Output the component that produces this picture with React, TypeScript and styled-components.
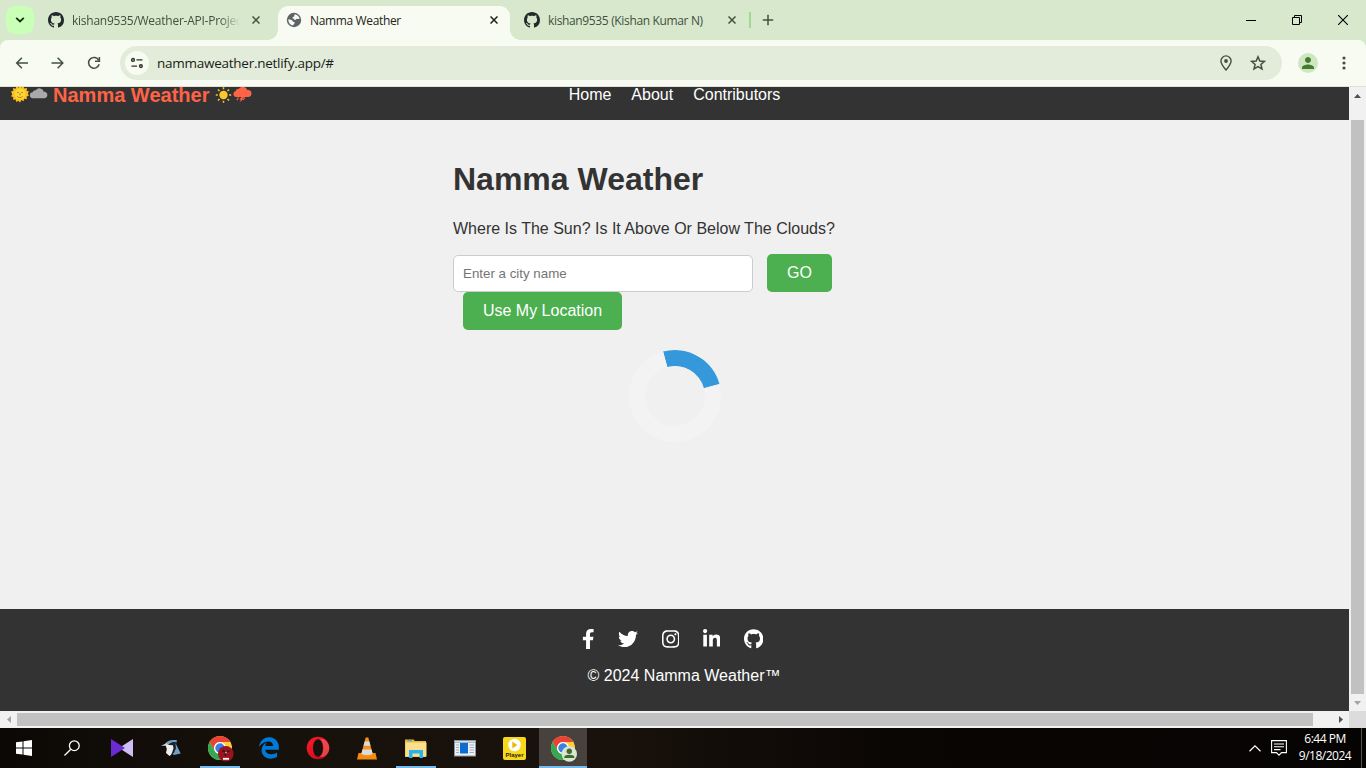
import React from "react";
import styled, { createGlobalStyle, css } from "styled-components";
import { FaFacebookF, FaTwitter, FaInstagram, FaLinkedinIn, FaGithub } from "react-icons/fa";
import { FaEdgeLegacy } from "react-icons/fa6";
import { MdPerson } from "react-icons/md";

const Global = createGlobalStyle`
  * { box-sizing: border-box; }
  body { margin: 0; overflow: hidden; font-family: "Liberation Sans", Arial, sans-serif; }
  svg { display: block; flex: none; }
  button, input { font-family: inherit; }
`;

const Screen = styled.div`
  width: 1366px;
  height: 768px;
  display: flex;
  flex-direction: column;
  overflow: hidden;
  background: #d7e8cd;
`;

/* ---------- Tab strip ---------- */
const TabStrip = styled.div`
  height: 40px;
  flex: none;
  display: flex;
  align-items: flex-start;
  padding-left: 6px;
  font-family: "Open Sans", "Noto Sans", sans-serif;
  font-size: 12px;
  color: #42503d;
`;
const TabSearch = styled.div`
  width: 28px;
  height: 28px;
  margin: 6px 6px 0 0;
  border-radius: 9px;
  background: #c9ffb6;
  display: flex;
  align-items: center;
  justify-content: center;
`;
const Tab = styled.div<{ $active?: boolean; $width: number; $gapAfter?: number }>`
  position: relative;
  width: ${(p) => p.$width}px;
  height: 34px;
  margin-top: 6px;
  margin-right: ${(p) => p.$gapAfter ?? 0}px;
  padding: 0 12px 6px 8px;
  display: flex;
  align-items: center;
  gap: 8px;
  ${(p) =>
    p.$active &&
    css`
      background: #f8fbf1;
      color: #1c241a;
      border-radius: 10px 10px 0 0;
      &::before,
      &::after {
        content: "";
        position: absolute;
        bottom: 0;
        width: 10px;
        height: 10px;
      }
      &::before {
        left: -10px;
        background: radial-gradient(circle at 0 0, transparent 9.5px, #f8fbf1 10px);
      }
      &::after {
        right: -10px;
        background: radial-gradient(circle at 100% 0, transparent 9.5px, #f8fbf1 10px);
      }
    `}
`;
const TabTitle = styled.span<{ $fade?: boolean; $track?: number }>`
  flex: 1;
  overflow: hidden;
  white-space: nowrap;
  line-height: 18px;
  padding-top: 1px;
  letter-spacing: ${(p) => p.$track ?? -0.35}px;
  ${(p) =>
    p.$fade &&
    css`
      margin-right: 4px;
      mask-image: linear-gradient(90deg, #000 88%, transparent);
    `}
`;
const TabDivider = styled.div`
  width: 2px;
  height: 16px;
  margin: 12px 11px 0 1px;
  background: #a1d892;
`;
const NewTab = styled.div`
  margin-top: 14px;
`;
const WindowControls = styled.div`
  margin-left: auto;
  display: flex;
`;
const WinButton = styled.div`
  width: 46px;
  height: 40px;
  display: flex;
  align-items: center;
  justify-content: center;
`;

/* ---------- Toolbar ---------- */
const Toolbar = styled.div`
  height: 47px;
  flex: none;
  display: flex;
  align-items: center;
  padding: 0 12px 0 12px;
  background: #f8fbf1;
  border-bottom: 1px solid #dfe2d1;
  border-radius: 8px 8px 0 0;
  color: #42503d;
`;
const ToolIcon = styled.div<{ $gap?: number }>`
  width: 20px;
  height: 20px;
  margin-right: ${(p) => p.$gap ?? 16}px;
  display: flex;
  align-items: center;
  justify-content: center;
`;
const Omnibox = styled.div`
  width: 1162px;
  height: 34px;
  border-radius: 17px;
  background: #e3ecdb;
  display: flex;
  align-items: center;
  padding: 0 14px 0 5px;
  gap: 12px;
`;
const SiteInfo = styled.div`
  width: 24px;
  height: 24px;
  border-radius: 50%;
  background: #f8fbf1;
  display: flex;
  align-items: center;
  justify-content: center;
  margin-right: -4px;
`;
const Url = styled.span`
  flex: 1;
  font: 13.5px/20px "Open Sans", "Noto Sans", sans-serif;
  letter-spacing: -0.26px;
  color: #191d17;
`;
const Avatar = styled.div`
  width: 20px;
  height: 20px;
  margin: 0 16px 0 16px;
  border-radius: 50%;
  background: #cfe6c3;
  color: #437c2c;
  display: flex;
  align-items: center;
  justify-content: center;
`;

/* ---------- Web page ---------- */
const Viewport = styled.div`
  flex: 1;
  display: grid;
  grid-template-columns: 1349px 17px;
  grid-template-rows: 624px 17px;
`;
const Page = styled.div`
  display: flex;
  flex-direction: column;
  background: #f0f0f0;
  overflow: hidden;
`;
const NavBar = styled.header`
  height: 33px;
  flex: none;
  overflow: hidden;
  display: grid;
  grid-template-columns: 1fr auto 1fr;
  align-items: start;
  background: #333;
`;
const Brand = styled.div`
  display: flex;
  align-items: flex-start;
  margin: -3px 0 0 10px;
  font-size: 20px;
  font-weight: bold;
  line-height: 23px;
  color: #ff6347;
  white-space: pre;
`;
const BrandName = styled.span`
  margin: 0 0 0 -0.5px;
`;
const NavLinks = styled.nav`
  display: flex;
  gap: 20px;
  margin-top: -1px;
`;
const NavLink = styled.a`
  color: #fff;
  font-size: 16px;
  line-height: 18px;
`;
const Main = styled.main`
  flex: 1;
  width: 443px;
  margin: 0 auto;
  padding-top: 41px;
  color: #333;
`;
const Title = styled.h1`
  margin: 0;
  font-size: 32px;
  line-height: 37px;
`;
const Tagline = styled.p`
  margin: 22px 0 16px;
  font-size: 16px;
  line-height: 18px;
  white-space: nowrap;
  color: #333;
`;
const SearchRow = styled.div`
  display: flex;
  align-items: flex-end;
  gap: 14px;
`;
const CityInput = styled.input`
  width: 300px;
  height: 37px;
  padding: 0 9px;
  border: 1px solid #ccc;
  border-radius: 5px;
  background: #fff;
  font-size: 13.333px;
  outline: none;
  &::placeholder { color: #757575; opacity: 1; }
`;
const ActionButton = styled.button<{ $width: number; $indent?: number }>`
  display: block;
  width: ${(p) => p.$width}px;
  height: 38px;
  margin-left: ${(p) => p.$indent ?? 0}px;
  padding: 0;
  border: 0;
  border-radius: 5px;
  background: #4caf50;
  color: #fff;
  font-size: 16px;
`;
const Spinner = styled.div`
  width: 92px;
  height: 92px;
  margin: 20px 0 0 176px;
  border: 16px solid #f3f3f3;
  border-top-color: #3498db;
  border-radius: 50%;
  transform: rotate(30deg);
`;
const Footer = styled.footer`
  height: 102px;
  flex: none;
  padding-top: 20px;
  background: #333;
  color: #fff;
  display: flex;
  flex-direction: column;
  align-items: center;
`;
const Socials = styled.div`
  display: flex;
  align-items: center;
  gap: 23.6px;
  margin-right: 4px;
`;
const Social = styled.a<{ $width: number }>`
  display: block;
  svg { width: ${(p) => p.$width}px; height: 20px; }
`;
const Copyright = styled.p`
  margin: 18px 0 0 19px;
  font-size: 16px;
  line-height: 18px;
`;

/* ---------- Scroll bars ---------- */
const ScrollV = styled.div`
  display: flex;
  flex-direction: column;
  align-items: center;
  background: #f1f1f1;
`;
const ScrollH = styled.div`
  display: flex;
  align-items: center;
  background: #f1f1f1;
`;
const ScrollButton = styled.div`
  width: 17px;
  height: 17px;
  display: flex;
  align-items: center;
  justify-content: center;
`;
const ThumbV = styled.div`
  width: 13px;
  height: 574px;
  margin: 16px 0 auto;
  background: #c1c1c1;
`;
const ThumbH = styled.div`
  width: 1296px;
  height: 13px;
  margin-right: auto;
  background: #c1c1c1;
`;
const Corner = styled.div`
  background: #dcdcdc;
`;

/* ---------- Task bar ---------- */
const TaskBar = styled.div`
  height: 40px;
  flex: none;
  display: flex;
  background: linear-gradient(90deg, #0b0805 0, #17110b 250px, #19120c 600px, #0a0604 900px, #060403 100%);
  color: #fff;
`;
const TaskGroup = styled.div<{ $gap: number; $left?: number }>`
  display: flex;
  gap: ${(p) => p.$gap}px;
  margin-left: ${(p) => p.$left ?? 0}px;
`;
const TaskItem = styled.div<{ $open?: boolean; $active?: boolean }>`
  position: relative;
  width: 48px;
  height: 40px;
  display: flex;
  align-items: center;
  justify-content: center;
  background: ${(p) => (p.$active ? "#48423f" : "transparent")};
  ${(p) =>
    (p.$open || p.$active) &&
    css`
      &::after {
        content: "";
        position: absolute;
        bottom: 0;
        left: ${p.$active ? 0 : 4}px;
        right: ${p.$active ? 0 : 4}px;
        height: 2px;
        background: #76b9ed;
      }
    `}
`;
const Tray = styled.div`
  margin-left: auto;
  display: flex;
  align-items: center;
  gap: 10px;
`;
const Clock = styled.div`
  width: 62px;
  margin: -3px -5px 0 -3px;
  text-align: center;
  font: 12px/17px "Open Sans", "Noto Sans", sans-serif;
  letter-spacing: -0.5px;
  white-space: nowrap;
`;
const ShowDesktop = styled.div`
  width: 5px;
  height: 40px;
  border-left: 1px solid #56524f;
`;

const Octocat = () => (
  <svg width="16" height="16" viewBox="0 0 16 16" fill="#24292e">
    <path d="M8 0C3.58 0 0 3.58 0 8c0 3.54 2.29 6.53 5.47 7.59.4.07.55-.17.55-.38 0-.19-.01-.82-.01-1.49-2.01.37-2.53-.49-2.69-.94-.09-.23-.48-.94-.82-1.13-.28-.15-.68-.52-.01-.53.63-.01 1.08.58 1.23.82.72 1.21 1.87.87 2.33.66.07-.52.28-.87.51-1.07-1.78-.2-3.64-.89-3.64-3.95 0-.87.31-1.59.82-2.15-.08-.2-.36-1.02.08-2.12 0 0 .67-.21 2.2.82.64-.18 1.32-.27 2-.27.68 0 1.36.09 2 .27 1.53-1.04 2.2-.82 2.2-.82.44 1.1.16 1.92.08 2.12.51.56.82 1.27.82 2.15 0 3.07-1.87 3.75-3.65 3.95.29.25.54.73.54 1.48 0 1.07-.01 1.93-.01 2.2 0 .21.15.46.55.38A8.013 8.013 0 0016 8c0-4.42-3.58-8-8-8z" />
  </svg>
);
const Globe = () => (
  <svg width="16" height="16" viewBox="0 0 16 16">
    <circle cx="8" cy="8" r="7.200" fill="#5f6368" />
    <path d="M8.800 2.300c2.300.3 4.300 2 4.900 4.300-1 .9-1.800.2-2.600.2-1 0-.8 1.200-2 1.200-1.400 0-.8-1.500-2.200-1.600-.9-.1-.3-1.700.7-1.700 1.300 0 .2-1.500 1.200-2.400zM2.300 7.300c1.500.4 3.800.5 4.500 1.900.4.900 1.800.3 1.900 1.500.1 1.400-1.500 1.200-1.500 2.900-2.600-.3-5-2.700-4.900-6.300z" fill="#f8fbf1" />
  </svg>
);
const CloseX = ({ color = "#42503d" }: { color?: string }) => (
  <svg width="8" height="8" viewBox="0 0 8 8" stroke={color} strokeWidth="1.500">
    <path d="M.5.5l7 7M7.500 .5l-7 7" />
  </svg>
);

const SunFace = () => (
  <svg width="20" height="20" viewBox="0 -1 20 22">
    <path fill="#fcc21b" d="M10 .5l1.600 2.400 2.300-1.600.8 2.700 2.900-.6-.3 2.900 2.500.9-1.200 2.300 1.200 2.400-2.500.9.3 2.900-2.900-.4-.8 2.700-2.500-1.500L10 19.500l-1.600-2.200-2.400 1.400-.8-2.700-2.900.4.400-2.900-2.500-.9 1.300-2.300L.2 7.300l2.500-.9-.4-2.900 2.900.6.8-2.700 2.400 1.600z" />
    <circle cx="10" cy="10" r="6" fill="#fdd835" />
    <path d="M6.700 8.300h2M11.300 8.300h2M10 9v2.400M7 12.600c1.500 1.800 4.500 1.800 6 0" fill="none" stroke="#b27a28" strokeWidth="1" />
  </svg>
);
const CloudShape = () => (
  <svg width="18" height="20" viewBox="0 0 18 20">
    <path fill="#a9a9a9" d="M3 14.200a3 3 0 0 1-.4-6 3 3 0 0 1 3.200-2 4.500 4.500 0 0 1 8 1.500A3.300 3.300 0 0 1 14.800 14.200z" />
  </svg>
);
const SunRays = () => (
  <svg width="18" height="20" viewBox="0 0 18 20">
    <circle cx="8.500" cy="11" r="4.200" fill="#fdc72f" />
    <path d="M8.500 3.200v2M8.500 16.800v2M.8 11h2M14.200 11h2M3 5.500l1.500 1.500M12.500 15l1.500 1.500M14 5.500L12.500 7M4.500 15L3 16.500" stroke="#fdc72f" strokeWidth="1.500" />
  </svg>
);
const Storm = () => (
  <svg width="19" height="20" viewBox="0 0 19 20">
    <path fill="#ff6347" d="M3 13a3 3 0 0 1-.3-5.900 3 3 0 0 1 3.300-2.300 4.600 4.600 0 0 1 8.200 1.300 3.500 3.500 0 0 1 1.500 6.900h-4.200l-2.400 2h1.300L6.500 18.500l1.500-2.800H6.300L8.500 13z" />
    <path d="M5.500 13.500l-1.700 2.600M11.800 13.500l-1.500 2.600" stroke="#ff6347" strokeWidth="1.100" />
  </svg>
);

const ChromeLogo = ({ badge }: { badge: "red" | "person" }) => (
  <svg width="28" height="28" viewBox="0 0 28 28">
    <circle cx="14" cy="14" r="12" fill="#ffcd40" />
    <path d="M3.600 8A12 12 0 0 1 24.400 8H14a6 6 0 0 0-5.200 9z" fill="#ea4335" />
    <path d="M3.600 8a12 12 0 0 0 10.400 18l5.200-9a6 6 0 0 1-10.400 0z" fill="#35a853" />
    <circle cx="14" cy="14" r="6" fill="#fff" />
    <circle cx="14" cy="14" r="4.700" fill="#3f7de8" />
    {badge === "red" ? (
      <g>
        <circle cx="19.800" cy="19.800" r="7.800" fill="#9b1320" />
        <path d="M16.500 16.500l3 1.500 4-1M19.500 18v4" stroke="#401016" strokeWidth="1.600" fill="none" />
        <path d="M17 24.800h6" stroke="#fff" strokeWidth="1.800" />
        <circle cx="20" cy="18.500" r="1" fill="#c9a3a3" />
      </g>
    ) : (
      <g>
        <circle cx="20.300" cy="20" r="7.700" fill="#d7e8cd" />
        <circle cx="20.300" cy="17.200" r="2.700" fill="#426834" />
        <path d="M15.300 24v-1.200c0-2.800 10-2.800 10 0V24z" fill="#426834" />
      </g>
    )}
  </svg>
);

const pinned: { key: string; open?: boolean; active?: boolean; icon: React.ReactNode }[] = [
  {
    key: "vs",
    icon: (
      <svg width="22" height="18" viewBox="0 0 22 18">
        <path d="M22 0v18L8 9z" fill="#cdbcf5" />
        <path d="M0 0l14 9L0 18z" fill="#6a2bd0" />
      </svg>
    ),
  },
  {
    key: "bird",
    icon: (
      <svg width="20" height="18" viewBox="0 0 20 18">
        <path d="M4 5C6 1.500 10 .5 16 1.200L15 5l4.700 9.500-6.700 1.500-4-3z" fill="#6f9fc9" />
        <path d="M4.500 6L9 4l4 1.500.8 3.500-1.300 5-4 3-3.500-3 .8-4z" fill="#f0efe9" />
        <path d="M0 6.800l5.500-2.600 1.500 1-1.800 1.600z" fill="#d9d9d4" />
        <path d="M6.500 5.200L12 3l3.500.3-1 2 .5 4-2 4.500-3.500 3 1.700-3.500 1.300-4-.6-3-3.400-.2z" fill="#17232f" />
      </svg>
    ),
  },
  { key: "chrome-red", open: true, icon: <ChromeLogo badge="red" /> },
  { key: "edge", icon: <FaEdgeLegacy size={22} color="#0078d7" /> },
  {
    key: "opera",
    icon: (
      <svg width="24" height="24" viewBox="0 0 24 24">
        <defs>
          <linearGradient id="op" x1="0" y1="0" x2="1" y2="1">
            <stop offset="0" stopColor="#ff1b2d" />
            <stop offset=".6" stopColor="#d41220" />
            <stop offset="1" stopColor="#a70014" />
          </linearGradient>
        </defs>
        <path fillRule="evenodd" fill="url(#op)" d="M12 .7a11.300 11.300 0 1 0 0 22.600 11.300 11.300 0 1 0 0-22.600zM12 3.300c2.900 0 4.900 3.900 4.900 8.700s-2 8.700-4.900 8.700S7.100 16.800 7.100 12s2-8.700 4.900-8.700z" />
        <path d="M14 3.300c4.500 2.500 4.500 15 0 17.400 5 1.500 9.300-4 9.300-8.700S19 1.800 14 3.300z" fill="#ff6a6a" opacity=".6" />
      </svg>
    ),
  },
  {
    key: "vlc",
    icon: (
      <svg width="20" height="23" viewBox="0 0 20 23">
        <path d="M1.500 16h17l1.500 6.500H0z" fill="#f58a0b" />
        <path d="M8.700.5h2.600L16 18c-2 2-10 2-12 0z" fill="#f7931a" />
        <path d="M7.700 4.500h4.600l1.200 4.200H6.500zM5.400 12.500h9.200l1 4c-2 2-9.200 2-11.200 0z" fill="#d9dcde" />
      </svg>
    ),
  },
  {
    key: "files",
    open: true,
    icon: (
      <svg width="22" height="19" viewBox="0 0 22 19">
        <path d="M0 .5h8.500l1.500 1.500h11V18H0z" fill="#e9b93f" />
        <path d="M.5 3.500h21V17.500H.5z" fill="#fbdf8b" />
        <path d="M2.500 1.700H7" stroke="#35a7df" />
        <path d="M4 19v-8h14v8h-3.500v-4.500h-7V19z" fill="#28b4ee" />
      </svg>
    ),
  },
  {
    key: "reader",
    icon: (
      <svg width="22" height="17" viewBox="0 0 22 17">
        <path d="M0 0h22v16.500H0z" fill="#8a98a8" />
        <path d="M1 3h20v12.500H1z" fill="#eef1f3" />
        <path d="M1 1h20v1.500H1z" fill="#d5dce3" />
        <path d="M6 3h8v10.500H6z" fill="#0b6cd3" />
        <path d="M2 5h3M2 7.500h3M2 10h3M2 12.500h3M15.500 5H20M15.500 7.500H20M15.500 10H20M15.500 12.500H20" stroke="#a3aeb9" />
      </svg>
    ),
  },
  {
    key: "player",
    icon: (
      <svg width="23" height="23" viewBox="0 0 23 23">
        <rect width="23" height="23" rx="2" fill="#f8d81c" />
        <circle cx="11.500" cy="8" r="6.300" fill="#fff" />
        <path d="M9.300 4.500l5 3.500-5 3.500z" fill="#e5b80b" />
        <text x="11.500" y="20.300" textAnchor="middle" fontFamily="Liberation Sans, sans-serif" fontWeight="bold" fontSize="6" fill="#2a2410">Player</text>
      </svg>
    ),
  },
  { key: "chrome-person", active: true, icon: <ChromeLogo badge="person" /> },
];

const socials = [
  { name: "facebook", width: 12.5, Icon: FaFacebookF },
  { name: "twitter", width: 20, Icon: FaTwitter },
  { name: "instagram", width: 17.5, Icon: FaInstagram },
  { name: "linkedin", width: 17.5, Icon: FaLinkedinIn },
  { name: "github", width: 19.4, Icon: FaGithub },
];

export default function App() {
  return (
    <Screen>
      <Global />
      <TabStrip>
        <TabSearch>
          <svg width="10" height="6" viewBox="0 0 10 6" fill="none" stroke="#1b2a16" strokeWidth="1.800">
            <path d="M1.200 .8L5 4.500 8.800.8" />
          </svg>
        </TabSearch>
        <Tab $width={232} $gapAfter={6}>
          <Octocat />
          <TabTitle $fade $track={-0.25}>kishan9535/Weather-API-Project</TabTitle>
          <CloseX />
        </Tab>
        <Tab $active $width={232} $gapAfter={6}>
          <Globe />
          <TabTitle>Namma Weather</TabTitle>
          <CloseX color="#1c241a" />
        </Tab>
        <Tab $width={232}>
          <Octocat />
          <TabTitle>kishan9535 (Kishan Kumar N)</TabTitle>
          <CloseX />
        </Tab>
        <TabDivider />
        <NewTab>
          <svg width="12" height="12" viewBox="0 0 12 12" stroke="#42503d" strokeWidth="1.500">
            <path d="M6 .8v10.400M.8 6h10.400" />
          </svg>
        </NewTab>
        <WindowControls>
          <WinButton>
            <svg width="10" height="10" viewBox="0 0 10 10"><path d="M0 5.500h10" stroke="#000" /></svg>
          </WinButton>
          <WinButton>
            <svg width="10" height="10" viewBox="0 0 10 10" fill="none" stroke="#000">
              <path d="M.5 2.500h7v7h-7zM2.500 2.500v-2h7v7h-2" />
            </svg>
          </WinButton>
          <WinButton>
            <svg width="10" height="10" viewBox="0 0 10 10" stroke="#000" strokeWidth="1.100"><path d="M0 0l10 10M10 0L0 10" /></svg>
          </WinButton>
        </WindowControls>
      </TabStrip>

      <Toolbar>
        <ToolIcon>
          <svg width="14" height="12" viewBox="0 0 14 12" fill="none" stroke="currentColor" strokeWidth="1.500">
            <path d="M13 6H2M6.900 .8L1.700 6l5.200 5.200" />
          </svg>
        </ToolIcon>
        <ToolIcon>
          <svg width="14" height="12" viewBox="0 0 14 12" fill="none" stroke="currentColor" strokeWidth="1.500">
            <path d="M.5 6h11.500M6.600 .8L11.800 6l-5.200 5.200" />
          </svg>
        </ToolIcon>
        <ToolIcon>
          <svg width="14" height="14" viewBox="0 0 14 14" fill="none" stroke="currentColor" strokeWidth="1.500">
            <path d="M12.200 8.300A5.400 5.400 0 1 1 11.800 4.300" />
            <path d="M12.400 1v4.200H8" />
          </svg>
        </ToolIcon>
        <Omnibox>
          <SiteInfo>
            <svg width="12" height="12" viewBox="0 0 12 12" fill="none" stroke="#2b3327" strokeWidth="1.400">
              <circle cx="2" cy="2.900" r="1.400" />
              <path d="M5.500 2.900H11.500M.5 9.100h5.500" />
              <circle cx="9.900" cy="9.100" r="1.400" />
            </svg>
          </SiteInfo>
          <Url>nammaweather.netlify.app/#</Url>
          <ToolIcon $gap={0}>
            <svg width="12" height="16" viewBox="0 0 12 16" fill="none" stroke="currentColor" strokeWidth="1.400">
              <path d="M6 15C3 11.500.9 8.800.9 6a5.100 5.100 0 0 1 10.200 0c0 2.800-2.100 5.500-5.100 9z" />
              <circle cx="6" cy="6" r="1.900" fill="currentColor" stroke="none" />
            </svg>
          </ToolIcon>
          <ToolIcon $gap={0}>
            <svg width="16" height="16" viewBox="0 0 16 16" fill="none" stroke="currentColor" strokeWidth="1.500">
              <path d="M8 1.800l1.800 4.200 4.600.4-3.500 3 1.100 4.500L8 11.500l-4 2.400 1.100-4.500-3.500-3 4.600-.4z" />
            </svg>
          </ToolIcon>
        </Omnibox>
        <Avatar><MdPerson size={18} /></Avatar>
        <ToolIcon $gap={0}>
          <svg width="4" height="14" viewBox="0 0 4 14" fill="currentColor">
            <circle cx="2" cy="2" r="1.600" /><circle cx="2" cy="7" r="1.600" /><circle cx="2" cy="12" r="1.600" />
          </svg>
        </ToolIcon>
      </Toolbar>

      <Viewport>
        <Page>
          <NavBar>
            <Brand>
              <SunFace /><CloudShape /><BrandName> Namma Weather </BrandName><SunRays /><Storm />
            </Brand>
            <NavLinks>
              <NavLink>Home</NavLink>
              <NavLink>About</NavLink>
              <NavLink>Contributors</NavLink>
            </NavLinks>
          </NavBar>
          <Main>
            <Title>Namma Weather</Title>
            <Tagline>Where Is The Sun? Is It Above Or Below The Clouds?</Tagline>
            <SearchRow>
              <CityInput placeholder="Enter a city name" />
              <ActionButton $width={65}>GO</ActionButton>
            </SearchRow>
            <ActionButton $width={159} $indent={10}>Use My Location</ActionButton>
            <Spinner />
          </Main>
          <Footer>
            <Socials>
              {socials.map(({ name, width, Icon }) => (
                <Social key={name} $width={width}><Icon /></Social>
              ))}
            </Socials>
            <Copyright>© 2024 Namma Weather™</Copyright>
          </Footer>
        </Page>
        <ScrollV>
          <ScrollButton><svg width="7" height="4" viewBox="0 0 7 4"><path d="M3.500 0L7 4H0z" fill="#505050" /></svg></ScrollButton>
          <ThumbV />
          <ScrollButton><svg width="7" height="4" viewBox="0 0 7 4"><path d="M0 0h7L3.500 4z" fill="#a3a3a3" /></svg></ScrollButton>
        </ScrollV>
        <ScrollH>
          <ScrollButton><svg width="4" height="7" viewBox="0 0 4 7"><path d="M4 0v7L0 3.500z" fill="#a3a3a3" /></svg></ScrollButton>
          <ThumbH />
          <ScrollButton><svg width="4" height="7" viewBox="0 0 4 7"><path d="M0 0l4 3.500L0 7z" fill="#505050" /></svg></ScrollButton>
        </ScrollH>
        <Corner />
      </Viewport>

      <TaskBar>
        <TaskGroup $gap={0}>
          <TaskItem>
            <svg width="16" height="16" viewBox="0 0 16 16" fill="#fff">
              <path d="M0 2.300l6.500-.9v6.100H0zM7.500 1.200L16 0v7.500H7.500zM0 8.500h6.500v6.100L0 13.700zM7.500 8.500H16V16l-8.500-1.200z" />
            </svg>
          </TaskItem>
          <TaskItem>
            <svg width="16" height="16" viewBox="0 0 16 16" fill="none" stroke="#fff" strokeWidth="1.300">
              <circle cx="10.300" cy="5.700" r="4.900" /><path d="M6.800 9.200L.5 15.500" />
            </svg>
          </TaskItem>
        </TaskGroup>
        <TaskGroup $gap={1} $left={2}>
          {pinned.map((p) => (
            <TaskItem key={p.key} $open={p.open} $active={p.active}>{p.icon}</TaskItem>
          ))}
        </TaskGroup>
        <Tray>
          <svg width="12" height="7" viewBox="0 0 12 7" fill="none" stroke="#fff" strokeWidth="1.200">
            <path d="M.5 6.300L6 .9l5.500 5.400" />
          </svg>
          <svg width="16" height="16" viewBox="0 0 16 16" fill="none" stroke="#fff" strokeWidth="1.100">
            <path d="M.6.600h14.800v12H10.500L8 15.200l-2.500-2.600H.6zM3 4h10M3 6.800h10M3 9.600h6.500" />
          </svg>
          <Clock>6:44 PM<br />9/18/2024</Clock>
          <ShowDesktop />
        </Tray>
      </TaskBar>
    </Screen>
  );
}
